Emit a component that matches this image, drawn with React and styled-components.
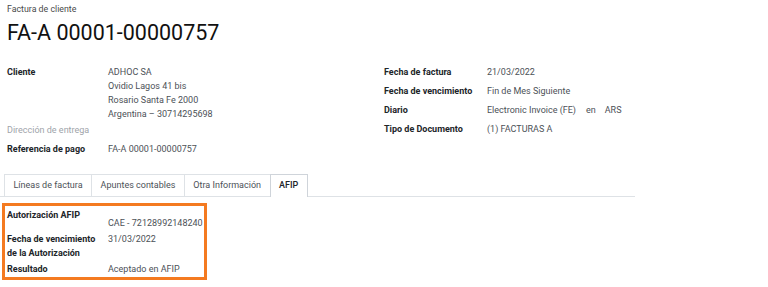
import React from "react";
import styled, { createGlobalStyle } from "styled-components";

const Global = createGlobalStyle`
  body {
    margin: 0;
    background: #fff;
    font-family: Roboto, "Noto Sans", sans-serif;
    color: #212529;
  }
`;

const Page = styled.div`
  width: 768px;
  height: 287px;
  overflow: hidden;
`;

const Head = styled.div`
  padding: 3px 7px 0;
`;

const Breadcrumb = styled.div`
  font-size: 8.8px;
  line-height: 12px;
  color: #4a4a4a;
`;

const Title = styled.h1`
  margin: 5px 0 0;
  font-size: 21.5px;
  font-weight: 400;
  line-height: 26px;
  color: #111;
`;

const Group = styled.div`
  display: grid;
  grid-template-columns: 377px 377px;
  padding: 17px 7px 0;
`;

const Col = styled.div`
  display: flex;
  flex-direction: column;
`;

const Row = styled.div`
  display: grid;
  grid-template-columns: ${(p) => p.$label || 101}px 1fr;
  min-height: ${(p) => (p.$min === undefined ? 19 : p.$min)}px;
  padding-top: 2px;
  box-sizing: border-box;
  font-size: 9px;
  line-height: 14px;
`;

const Label = styled.div`
  font-weight: ${(p) => (p.$muted ? 400 : 700)};
  color: ${(p) => (p.$muted ? "#a0a4aa" : "#212529")};
`;

const Value = styled.div`
  color: #4c5157;
  padding-top: ${(p) => p.$offset || 0}px;
  white-space: nowrap;
`;

const Small = styled.span`
  margin: 0 9px 0 10px;
`;

const Notebook = styled.div`
  width: 635px;
  margin-top: 15px;
  border-bottom: 1px solid #dee2e6;
  display: flex;
  padding-left: 5px;
  box-sizing: border-box;
`;

const Tab = styled.div`
  height: 21px;
  line-height: 21px;
  padding: 0 8.5px;
  font-size: 9px;
  color: ${(p) => (p.$active ? "#212529" : "#4c5157")};
  font-weight: ${(p) => (p.$active ? 500 : 400)};
  border: 1px solid #dee2e6;
  border-bottom: none;
  margin-left: -1px;
  margin-bottom: -1px;
  background: #fff;
  ${(p) => p.$active && "height: 22px; border-color: #cfd4da;"}
`;

const Highlight = styled.div`
  width: 205px;
  margin: 6px 0 0 2px;
  border: 3px solid #f47a20;
  box-sizing: border-box;
  padding: 0 0 0 2px;
`;

export default function App() {
  return (
    <Page>
      <Global />
      <Head>
        <Breadcrumb>Factura de cliente</Breadcrumb>
        <Title>FA-A 00001-00000757</Title>
      </Head>
      <Group>
        <Col>
          <Row>
            <Label>Cliente</Label>
            <Value>
              ADHOC SA
              <br />
              Ovidio Lagos 41 bis
              <br />
              Rosario Santa Fe 2000
              <br />
              Argentina – 30714295698
            </Value>
          </Row>
          <Row>
            <Label $muted>Dirección de entrega</Label>
            <Value />
          </Row>
          <Row>
            <Label>Referencia de pago</Label>
            <Value>FA-A 00001-00000757</Value>
          </Row>
        </Col>
        <Col>
          <Row $label={103}>
            <Label>Fecha de factura</Label>
            <Value>21/03/2022</Value>
          </Row>
          <Row $label={103}>
            <Label>Fecha de vencimiento</Label>
            <Value>Fin de Mes Siguiente</Value>
          </Row>
          <Row $label={103}>
            <Label>Diario</Label>
            <Value>
              Electronic Invoice (FE)<Small>en</Small>ARS
            </Value>
          </Row>
          <Row $label={103}>
            <Label>Tipo de Documento</Label>
            <Value>(1) FACTURAS A</Value>
          </Row>
        </Col>
      </Group>
      <Notebook>
        <Tab>Líneas de factura</Tab>
        <Tab>Apuntes contables</Tab>
        <Tab>Otra Información</Tab>
        <Tab $active>AFIP</Tab>
      </Notebook>
      <Highlight>
        <Row>
          <Label>Autorización AFIP</Label>
          <Value $offset={8}>CAE - 72128992148240</Value>
        </Row>
        <Row>
          <Label>
            Fecha de vencimiento
            <br />
            de la Autorización
          </Label>
          <Value>31/03/2022</Value>
        </Row>
        <Row $min={17}>
          <Label>Resultado</Label>
          <Value>Aceptado en AFIP</Value>
        </Row>
      </Highlight>
    </Page>
  );
}
